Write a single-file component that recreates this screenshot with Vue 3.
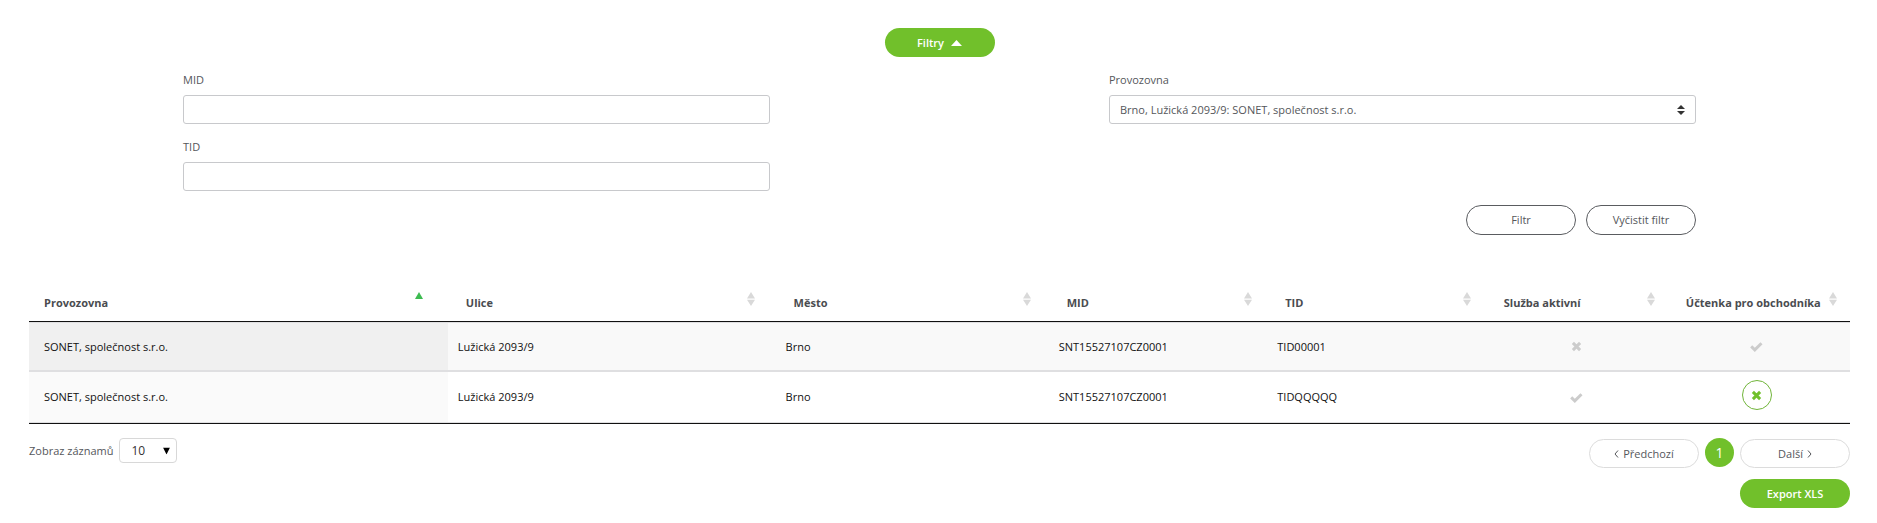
<script setup>
import { ref } from 'vue'

const open = ref(true)
const mid = ref('')
const tid = ref('')
const branch = ref('sonet')
const pageSize = ref('10')

const columns = [
  { key: 'branch', label: 'Provozovna', size: 'w23', sorted: true },
  { key: 'street', label: 'Ulice', size: 'w18' },
  { key: 'city', label: 'Město', size: 'w15' },
  { key: 'mid', label: 'MID', size: 'w12' },
  { key: 'tid', label: 'TID', size: 'w12' },
  { key: 'active', label: 'Služba aktivní', size: 'w10' },
  { key: 'receipt', label: 'Účtenka pro obchodníka', size: 'w10' }
]

const rows = [
  { branch: 'SONET, společnost s.r.o.', street: 'Lužická 2093/9', city: 'Brno', mid: 'SNT15527107CZ0001', tid: 'TID00001', active: false, receipt: true, editable: false },
  { branch: 'SONET, společnost s.r.o.', street: 'Lužická 2093/9', city: 'Brno', mid: 'SNT15527107CZ0001', tid: 'TIDQQQQQ', active: true, receipt: false, editable: true }
]

const check = 'M1.2 5.4 L4.8 8.8 L11.5 2.2'
const cross = 'M1.9 1.9 L9.1 9.1 M9.1 1.9 L1.9 9.1'

function clearFilter() {
  mid.value = ''
  tid.value = ''
}
</script>

<template>
  <main class="page">
    <button class="btn solid toggle" type="button" :aria-expanded="open" @click="open = !open">
      Filtry
      <svg width="11" height="6" viewBox="0 0 11 6" aria-hidden="true"><path d="M5.5 0 L11 6 H0 Z" fill="currentColor" /></svg>
    </button>

    <form v-if="open" class="filters" @submit.prevent>
      <div class="columns">
        <div class="column">
          <div class="field">
            <label for="mid">MID</label>
            <input id="mid" v-model="mid" class="control" type="text">
          </div>
          <div class="field">
            <label for="tid">TID</label>
            <input id="tid" v-model="tid" class="control" type="text">
          </div>
        </div>
        <div class="column">
          <div class="field">
            <label for="branch">Provozovna</label>
            <div class="picker">
              <select id="branch" v-model="branch" class="control">
                <option value="sonet">Brno, Lužická 2093/9: SONET, společnost s.r.o.</option>
              </select>
              <svg class="updown" width="8" height="10" viewBox="0 0 8 10" aria-hidden="true">
                <path d="M4 0 L8 4 H0 Z M0 6 H8 L4 10 Z" fill="#333" />
              </svg>
            </div>
          </div>
        </div>
      </div>
      <div class="actions">
        <button class="btn dark" type="submit">Filtr</button>
        <button class="btn dark" type="button" @click="clearFilter">Vyčistit filtr</button>
      </div>
    </form>

    <table class="grid">
      <thead>
        <tr>
          <th v-for="c in columns" :key="c.key" :class="c.size" scope="col" :aria-sort="c.sorted ? 'ascending' : 'none'">
            <button class="sort" type="button">
              <span>{{ c.label }}</span>
              <svg width="8" height="14" viewBox="0 0 8 14" aria-hidden="true">
                <path v-if="c.sorted" d="M4 0 L8 7 H0 Z" fill="#3dbb51" />
                <path v-else d="M4 0 L8 6.4 H0 Z M0 7.8 H8 L4 14 Z" fill="#d9d9d9" />
              </svg>
            </button>
          </th>
        </tr>
      </thead>
      <tbody>
        <tr v-for="(r, i) in rows" :key="i">
          <td>{{ r.branch }}</td>
          <td>{{ r.street }}</td>
          <td>{{ r.city }}</td>
          <td>{{ r.mid }}</td>
          <td>{{ r.tid }}</td>
          <td class="mark">
            <svg :width="r.active ? 13 : 11" height="11" :viewBox="r.active ? '0 0 13 11' : '0 0 11 11'" role="img" :aria-label="r.active ? 'Ano' : 'Ne'">
              <path :d="r.active ? check : cross" />
            </svg>
          </td>
          <td class="mark">
            <button v-if="r.editable" class="round" type="button" aria-label="Ne">
              <svg width="11" height="11" viewBox="0 0 11 11" aria-hidden="true"><path :d="cross" /></svg>
            </button>
            <svg v-else width="13" height="11" viewBox="0 0 13 11" role="img" aria-label="Ano"><path :d="check" /></svg>
          </td>
        </tr>
      </tbody>
    </table>

    <footer class="footer">
      <div class="length">
        <label for="size">Zobraz záznamů</label>
        <div class="picker">
          <select id="size" v-model="pageSize" class="size">
            <option>10</option>
            <option>25</option>
            <option>50</option>
          </select>
          <svg class="down" width="7" height="7" viewBox="0 0 7 7" aria-hidden="true"><path d="M0 0 H7 L3.5 7 Z" fill="#000" /></svg>
        </div>
      </div>
      <div class="right">
        <nav class="pager" aria-label="Stránkování">
          <button class="btn light" type="button">
            <svg width="5" height="8" viewBox="0 0 5 8" aria-hidden="true"><path d="M4 .5 L1 4 L4 7.5" /></svg>
            Předchozí
          </button>
          <button class="current" type="button" aria-current="page">1</button>
          <button class="btn light" type="button">
            Další
            <svg width="5" height="8" viewBox="0 0 5 8" aria-hidden="true"><path d="M1 .5 L4 4 L1 7.5" /></svg>
          </button>
        </nav>
        <button class="btn solid" type="button">Export XLS</button>
      </div>
    </footer>
  </main>
</template>

<style>
body {
  background: #fff;
}
</style>

<style scoped>
.page {
  box-sizing: border-box;
  display: flex;
  flex-direction: column;
  padding: 28px 27px 0 29px;
  font-family: "Open Sans", "Noto Sans", sans-serif;
  font-size: 11px;
  line-height: 16px;
  color: #55575b;
}
button, input, select {
  box-sizing: border-box;
  margin: 0;
  font: inherit;
  color: inherit;
}
button {
  padding: 0;
  border: 0;
  background: none;
  cursor: pointer;
}
.btn {
  display: flex;
  align-items: center;
  justify-content: center;
  gap: 4px;
  min-width: 110px;
  height: 29px;
  border-radius: 15px;
  white-space: nowrap;
}
.solid {
  background: #71c02b;
  color: #fff;
  font-weight: 600;
}
.toggle {
  align-self: center;
  gap: 7px;
}
.dark {
  height: 30px;
  border: 1px solid #5a5c60;
}
.light {
  border: 1px solid #dcdcdc;
}
.light svg {
  fill: none;
  stroke: #55575b;
}
.filters {
  padding: 0 154px;
}
.columns {
  display: flex;
  justify-content: space-between;
  padding: 15px 0 14px;
}
.column {
  display: flex;
  flex-direction: column;
  gap: 15px;
  flex: 0 1 587px;
}
.field {
  display: flex;
  flex-direction: column;
  gap: 7px;
}
.control {
  width: 100%;
  height: 29px;
  padding: 0 10px;
  border: 1px solid #c8c9cc;
  border-radius: 3px;
  background: #fff;
  appearance: none;
}
.picker {
  position: relative;
}
.updown, .down {
  position: absolute;
  top: 50%;
  transform: translateY(-50%);
  pointer-events: none;
}
.updown {
  right: 11px;
}
.down {
  right: 7px;
}
.actions {
  display: flex;
  justify-content: flex-end;
  gap: 10px;
}
.grid {
  width: 100%;
  margin-top: 50px;
  table-layout: fixed;
  border-spacing: 0;
  border-bottom: 1px solid #111;
  color: #111;
}
.w23 { width: 23%; }
.w18 { width: 18%; }
.w15 { width: 15%; }
.w12 { width: 12%; }
.w10 { width: 10%; }
th {
  padding: 0;
  border-bottom: 1px solid #111;
  color: #4a4c50;
}
.sort {
  display: flex;
  justify-content: space-between;
  align-items: flex-start;
  width: 100%;
  height: 36px;
  padding: 7px 5px 0 18px;
  font-weight: 700;
  white-space: nowrap;
}
th:first-child .sort {
  padding-left: 15px;
}
.sort span {
  padding-top: 3px;
}
.sort svg {
  flex: none;
  margin-right: 5%;
}
td {
  height: 47px;
  padding: 0 10px;
  border-top: 1px solid #dfdfe1;
  border-bottom: 1px solid #dfdfe1;
}
td:first-child {
  padding-left: 15px;
  background: #fafafa;
}
tr:nth-child(odd) td {
  background: #f9f9f9;
}
tr:nth-child(odd) td:first-child {
  background: #f0f0f0;
}
tr:last-child td {
  height: 50px;
}
.mark {
  text-align: center;
}
.mark:last-child {
  padding-right: 14px;
}
.mark svg {
  display: block;
  margin: 0 auto;
  fill: none;
  stroke: #ccc;
  stroke-width: 3;
}
.round {
  display: block;
  width: 30px;
  height: 30px;
  margin: 0 auto 4px;
  border: 1px solid #71b53a;
  border-radius: 50%;
}
.mark .round svg {
  stroke: #71c02b;
}
.footer {
  display: flex;
  justify-content: space-between;
  align-items: flex-start;
  padding-top: 14px;
}
.length {
  display: flex;
  align-items: center;
  gap: 6px;
}
.size {
  display: block;
  width: 58px;
  height: 25px;
  padding: 0 11px;
  border: 1px solid #d8d8d8;
  border-radius: 4px;
  background: #fff;
  color: #333;
  font-size: 12px;
  appearance: none;
}
.right {
  display: flex;
  flex-direction: column;
  align-items: flex-end;
  gap: 11px;
}
.pager {
  display: flex;
  align-items: flex-end;
  gap: 6px;
  height: 30px;
}
.current {
  align-self: flex-start;
  width: 29px;
  height: 29px;
  border-radius: 50%;
  background: #71c02b;
  color: #fff;
  font-size: 14px;
}
</style>
